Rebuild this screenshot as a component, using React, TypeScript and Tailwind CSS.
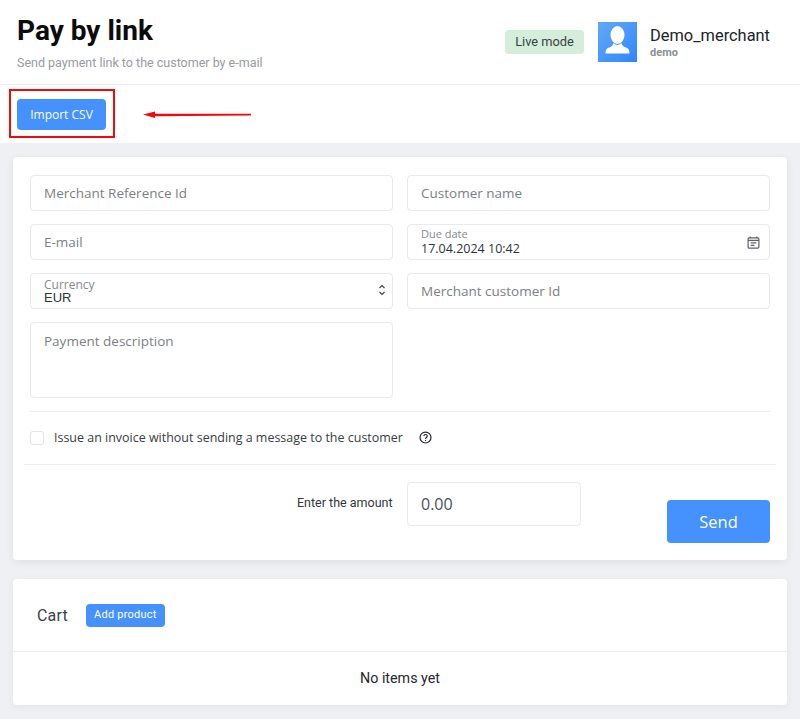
const roboto = "font-['Roboto',sans-serif]";
const field = "rounded-[4px] border border-[#e8eaef] bg-white";

function TextField({ label }: { label: string }) {
  return (
    <div className={`${field} flex h-[36px] items-center px-[13px] font-['Open_Sans',sans-serif] text-[13.500px] text-[#7b7f85]`}>
      {label}
    </div>
  );
}

export default function App() {
  return (
    <div className={`relative h-[719px] w-[800px] overflow-hidden bg-[#eef0f3] ${roboto}`}>
      <header className="flex h-[85px] justify-between border-b border-[#eceef1] bg-white pl-[17px] pr-[30px]">
        <div>
          <h1 className="mt-[13px] text-[28px] leading-[36px] font-bold text-[#0b0b0b]">Pay by link</h1>
          <p className="mt-[6px] text-[12.500px] leading-[16px] text-[#989ba0]">Send payment link to the customer by e-mail</p>
        </div>
        <div className="mt-[22px] flex h-[40px] items-center">
          <span className="flex h-[24px] w-[79px] items-center justify-center rounded-[4px] bg-[#d4eedb] text-[12.800px] text-[#3a3f45]">Live mode</span>
          <div className="ml-[14px] h-[40px] w-[39px] bg-gradient-to-br from-[#62a8f5] to-[#2f86ff]">
            <svg viewBox="0 0 39 40" className="h-full w-full" fill="#fff">
              <ellipse cx="19.500" cy="13" rx="7" ry="9" />
              <path d="M15.500 21c-.5 3-2 3.500-4.500 4.500-2.500 1-3.500 2.500-3.500 5.500v.5h24V31c0-3-1-4.500-3.500-5.500-2.500-1-4-1.500-4.500-4.500-2.500 2.500-5.500 2.500-8 0z" />
            </svg>
          </div>
          <div className="ml-[13px] w-[120px]">
            <div className="text-[16.400px] leading-[19px] whitespace-nowrap text-[#202328]">Demo_merchant</div>
            <div className="mt-[1px] text-[11px] leading-[13px] font-bold text-[#8b8f95]">demo</div>
          </div>
        </div>
      </header>

      <div className="h-[58px] bg-white pl-[17px] pt-[14px]">
        <button className="h-[31px] w-[89px] rounded-[4px] bg-[#4592ff] font-['Open_Sans',sans-serif] text-[12px] text-white">Import CSV</button>
      </div>

      <main className="flex flex-col gap-[19px] px-[13px] pt-[14px]">
        <section className="h-[403px] rounded-[4px] bg-white pt-[18px] shadow-[0_2px_8px_rgba(0,0,0,0.07)]">
          <div className="grid grid-cols-2 gap-x-[14px] gap-y-[13px] px-[17px]">
            <TextField label="Merchant Reference Id" />
            <TextField label="Customer name" />
            <TextField label="E-mail" />
            <div className={`${field} relative h-[36px] pl-[13px] font-['Open_Sans',sans-serif]`}>
              <div className="h-[17px] pt-[3px] text-[11px] leading-[12px] text-[#85898f]">Due date</div>
              <div className="text-[12.500px] leading-[14px] text-[#30343a]">17.04.2024 10:42</div>
              <svg viewBox="0 0 14 14" className="absolute top-[11px] right-[9px] h-[13px] w-[13px]" fill="none" stroke="#5c6066" strokeWidth="1.3">
                <rect x="1.200" y="2" width="11.600" height="11" rx="1.200" />
                <path d="M1.200 4.800h11.600M3.500.5v2M10.500.5v2M4 7.500h6M4 10h4" />
              </svg>
            </div>
            <div className={`${field} relative h-[36px] pl-[13px]`}>
              <div className="h-[17px] pt-[5px] font-['Open_Sans',sans-serif] text-[12px] leading-[11px] text-[#85898f]">Currency</div>
              <div className="font-['Liberation_Sans',sans-serif] text-[13px] leading-[13px] text-[#30343a]">EUR</div>
              <svg viewBox="0 0 8 12" className="absolute top-[10px] right-[6px] h-[12px] w-[8px]" fill="none" stroke="#3a3e44" strokeWidth="1.100">
                <path d="M1.500 4 4 1.500 6.500 4M1.500 8 4 10.500 6.500 8" />
              </svg>
            </div>
            <TextField label="Merchant customer Id" />
            <div className={`${field} h-[76px] px-[13px] pt-[8px] font-['Open_Sans',sans-serif] text-[13.500px] leading-[20px] text-[#7b7f85]`}>Payment description</div>
          </div>

          <div className="mx-[17px] mt-[13px] h-[20px] border-t border-[#eceef1]"></div>
          <div className="mx-[17px] flex h-[33px] items-start">
            <span className="h-[14px] w-[14px] rounded-[3px] border border-[#e3e5ea] bg-white"></span>
            <span className="ml-[10px] font-['Open_Sans',sans-serif] text-[12.470px] leading-[14px] text-[#383c42]">Issue an invoice without sending a message to the customer</span>
            <svg viewBox="0 0 14 14" className="ml-[16px] h-[13px] w-[13px]" fill="none" stroke="#25282d" strokeWidth="1.300">
              <circle cx="7" cy="7" r="5.900" />
              <path d="M5.200 5.500c.1-2.300 3.700-2.300 3.700 0 0 1.500-1.900 1.400-1.900 3" />
              <path d="M7 9.800v1" />
            </svg>
          </div>
          <div className="mx-[11px] border-t border-[#eceef1]"></div>

          <div className="flex items-start pt-[17px]">
            <span className="ml-[284px] w-[96px] pt-[14px] text-[12.500px] leading-[14px] whitespace-nowrap text-[#33373c]">Enter the amount</span>
            <div className={`${field} ml-[14px] flex h-[44px] w-[174px] items-center px-[13px] font-['Open_Sans',sans-serif] text-[16px] text-[#4b4f55]`}>0.00</div>
            <button className="mt-[18px] ml-[86px] h-[43px] w-[103px] rounded-[4px] bg-[#4592ff] pt-[1px] font-['Open_Sans',sans-serif] text-[16.500px] text-white">Send</button>
          </div>
        </section>

        <section className="h-[126px] rounded-[4px] bg-white shadow-[0_2px_8px_rgba(0,0,0,0.05)]">
          <div className="flex h-[73px] items-center border-b border-[#eceef1] pl-[24px]">
            <span className="pt-[1px] text-[16px] tracking-[0.01em] text-[#3c4046]">Cart</span>
            <button className="ml-[18px] h-[23px] w-[79px] rounded-[4px] bg-[#4592ff] pt-[1px] text-[11px] tracking-[0.02em] text-white">Add product</button>
          </div>
          <div className="flex h-[52px] items-center justify-center pt-[1px] text-[14.300px] text-[#25282d]">No items yet</div>
        </section>
      </main>

      {/* Red annotation drawn over the screenshot */}
      <div className="absolute top-[89px] left-[9px] h-[49px] w-[106px] border-2 border-[#f00a0a]"></div>
      <svg className="absolute top-[108px] left-[140px] h-[14px] w-[116px]" viewBox="0 0 116 14">
        <path d="M3 6.500 15 3.500V5.800L111 5.800v1.800L15 8.200V10z" fill="#f00a0a" />
      </svg>
    </div>
  );
}
